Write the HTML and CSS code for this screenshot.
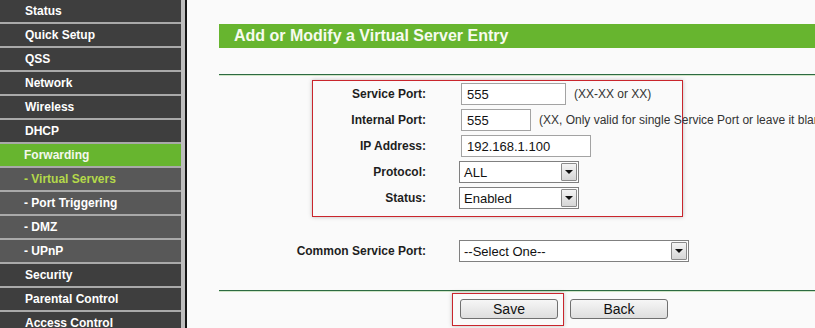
FILE: index.html
```html
<!DOCTYPE html>
<html lang="en">
<head>
  <meta charset="UTF-8" />
  <title>Virtual Servers</title>
  <link rel="stylesheet" href="styles.css">
</head>
<body>

  <nav class="menu">
    <ul>
      <li>Status</li>
      <li>Quick Setup</li>
      <li>QSS</li>
      <li>Network</li>
      <li>Wireless</li>
      <li>DHCP</li>
      <li class="active">Forwarding</li>
      <li class="sub current">- Virtual Servers</li>
      <li class="sub">- Port Triggering</li>
      <li class="sub">- DMZ</li>
      <li class="sub">- UPnP</li>
      <li>Security</li>
      <li>Parental Control</li>
      <li>Access Control</li>
    </ul>
  </nav>

  <main class="content">
    <h1 class="title">Add or Modify a Virtual Server Entry</h1>
    <div class="rule"></div>

    <!-- основні поля -->
    <div class="mark fields">
      <label>Service Port:</label>
      <div class="cell"><span class="input w-md">555</span><span class="hint">(XX-XX or XX)</span></div>

      <label>Internal Port:</label>
      <div class="cell"><span class="input w-sm">555</span><span class="hint">(XX, Only valid for single Service Port or leave it blank)</span></div>

      <label>IP Address:</label>
      <div class="cell"><span class="input w-lg">192.168.1.100</span></div>

      <label>Protocol:</label>
      <div class="cell"><span class="select w-sel">ALL<i class="arrow"></i></span></div>

      <label>Status:</label>
      <div class="cell"><span class="select w-sel">Enabled<i class="arrow"></i></span></div>
    </div>

    <div class="fields common">
      <label>Common Service Port:</label>
      <div class="cell"><span class="select w-wide">--Select One--<i class="arrow"></i></span></div>
    </div>

    <div class="rule"></div>

    <div class="actions">
      <span class="mark save-wrap"><button class="btn">Save</button></span>
      <button class="btn">Back</button>
    </div>
  </main>

</body>
</html>
```

FILE: styles.css
```css
body {
  margin: 0;
  font-family: "Liberation Sans", Arial, sans-serif;
  background-color: #fafafa;
  color: #222;
  display: flex;
  height: 328px;
  overflow: hidden;
}

/* Меню зліва */
.menu {
  width: 181px;
  flex-shrink: 0;
  background-color: #3e3e3e;
  border-right: 4px solid #bdbdbd;
}

.menu ul {
  list-style: none;
  margin: 0;
  padding: 0;
}

.menu li {
  height: 22px;
  line-height: 23px;
  padding-left: 25px;
  border-bottom: 2px solid #a9a9a9;
  background-color: #3e3e3e;
  color: #fff;
  font-size: 12px;
  font-weight: bold;
  white-space: nowrap;
}

.menu li.active {
  background-color: #67b52f;
  color: #f4f8ec;
  padding-left: 24px;
}

.menu li.sub {
  background-color: #585858;
  padding-left: 24px;
}

.menu li.current {
  color: #b4d94a;
}

/* Основна частина */
.content {
  flex: 1;
  border-left: 2px solid #151515;
  padding-left: 32px;
  min-width: 0;
}

.title {
  margin: 24px 0 0;
  height: 24px;
  line-height: 23px;
  padding-left: 15px;
  background-color: #67b52f;
  color: #f7fbef;
  font-size: 16px;
  font-weight: bold;
  white-space: nowrap;
}

.rule {
  margin-top: 26px;
  height: 1px;
  background-color: #2d6a42;
  border-bottom: 1px solid #cfe5c6;
}

.fields {
  display: grid;
  grid-template-columns: 113px auto;
  column-gap: 33px;
  grid-auto-rows: 26px;
  align-items: center;
}

.fields label {
  text-align: right;
  font-size: 12px;
  font-weight: bold;
  color: #1e1e1e;
  white-space: nowrap;
}

.cell {
  display: flex;
  align-items: center;
  white-space: nowrap;
}

.mark {
  border: 1px solid #c9252c;
  box-shadow: 0 0 4px rgba(0,0,0,0.25);
}

.mark.fields {
  width: 369px;
  margin: 4px 0 0 93px;
  padding: 0 0 4px;
  height: 131px;
  align-content: start;
}

.common {
  margin: 21px 0 0 0;
  grid-template-columns: 207px auto;
}

.input,
.select {
  display: inline-flex;
  align-items: center;
  box-sizing: border-box;
  height: 22px;
  background-color: #fff;
  font-size: 13px;
  color: #111;
}

.input {
  border: 1px solid #a3a3a3;
  padding-left: 5px;
  margin-left: 2px;
}

.w-sm { width: 70px; }
.w-md { width: 105px; }
.w-lg { width: 130px; }
.w-sel { width: 120px; }
.w-wide { width: 230px; }

.select {
  position: relative;
  border: 1px solid #808080;
  padding-left: 4px;
}

.arrow {
  position: absolute;
  top: 1px;
  right: 1px;
  width: 16px;
  height: 18px;
  box-sizing: border-box;
  border: 1px solid #8a8a8a;
  border-radius: 1px;
  background: linear-gradient(#f4f4f4, #d6d6d6);
}

.arrow::after {
  content: "";
  position: absolute;
  left: 3px;
  top: 6px;
  border-left: 4px solid transparent;
  border-right: 4px solid transparent;
  border-top: 4px solid #111;
}

.hint {
  font-size: 12px;
  color: #333;
  margin-left: 8px;
}

.actions {
  display: flex;
  align-items: center;
  margin: 6px 0 0 240px;
  gap: 11px;
}

.save-wrap {
  padding: 5px 5px 6px 7px;
  margin: -5px -5px -6px -7px;
  display: inline-block;
  line-height: 0;
}

.btn {
  width: 98px;
  height: 20px;
  padding: 0;
  border: 1px solid #707070;
  border-radius: 3px;
  background: linear-gradient(#f6f6f6, #dedede);
  font-family: "Liberation Sans", Arial, sans-serif;
  font-size: 14px;
  color: #111;
  line-height: 18px;
}
```
